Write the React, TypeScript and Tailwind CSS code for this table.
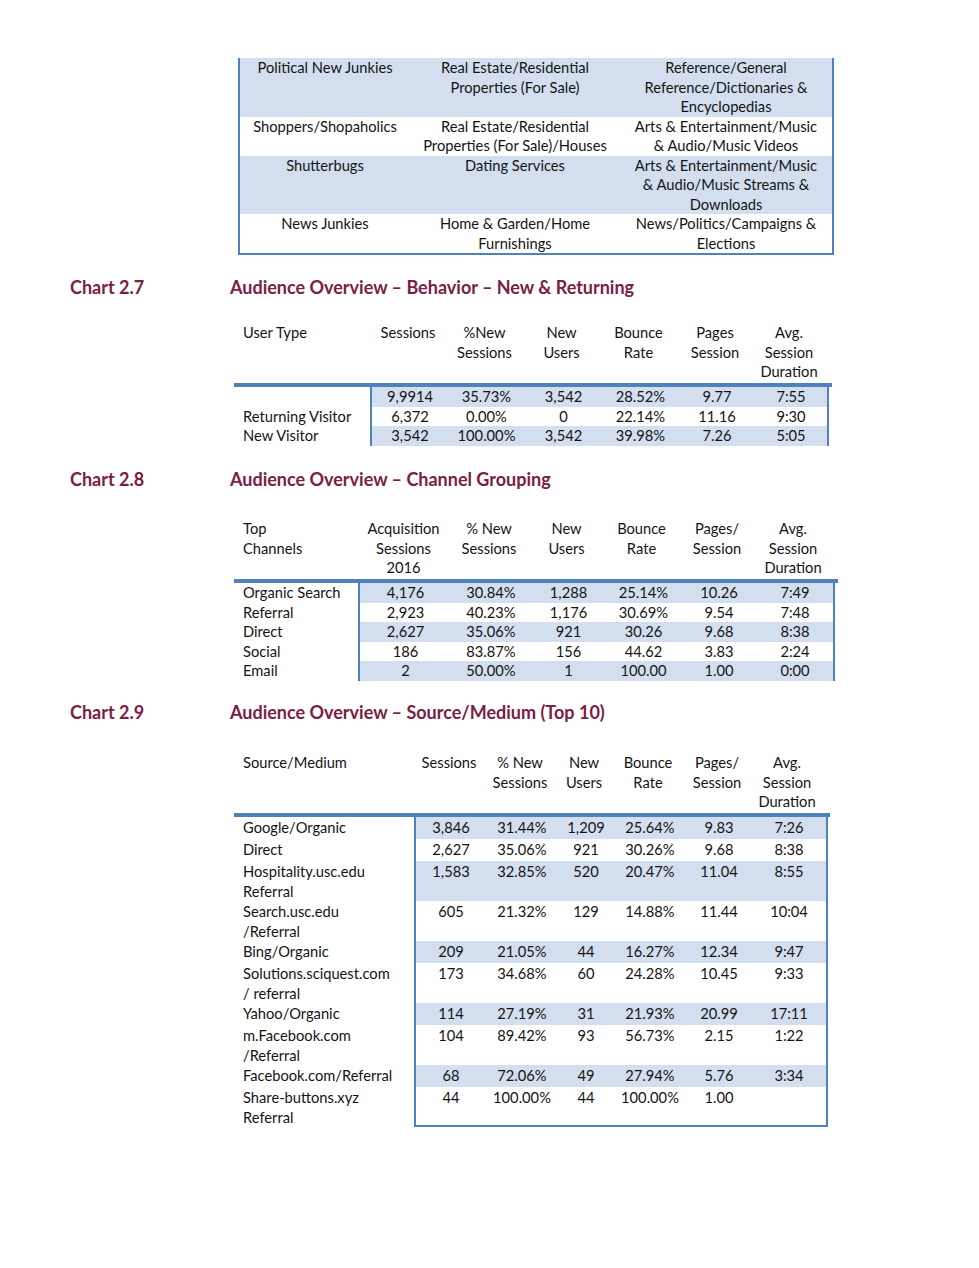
import React from "react";

type Row = { label: string[]; vals: string[]; shade: boolean };

const interests = [
    [["Political New Junkies"], ["Real Estate/Residential", "Properties (For Sale)"], ["Reference/General", "Reference/Dictionaries &", "Encyclopedias"]],
    [["Shoppers/Shopaholics"], ["Real Estate/Residential", "Properties (For Sale)/Houses"], ["Arts & Entertainment/Music", "& Audio/Music Videos"]],
    [["Shutterbugs"], ["Dating Services"], ["Arts & Entertainment/Music", "& Audio/Music Streams &", "Downloads"]],
    [["News Junkies"], ["Home & Garden/Home", "Furnishings"], ["News/Politics/Campaigns &", "Elections"]],
];

const Lines = ({lines}: { lines: string[] }) => (
    <>
        {lines.map((l, i) => <div key={i}>{l}</div>)}
    </>
);

const Heading = ({chart, title, className}: { chart: string; title: string; className: string }) => (
    <div className={"flex items-center h-[22px] font-bold text-[18px] text-[#7a2045] " + className}>
        <div className="w-[230px] pl-[70px]">{chart}</div>
        <div>{title}</div>
    </div>
);

const Table = ({labelW, widths, lineW, header, rows, rowCls, boxed, className}: {
    labelW: string;
    widths: string[];
    lineW: string;
    header: string[][];
    rows: Row[];
    rowCls: string;
    boxed?: boolean;
    className: string;
}) => (
    <div className={"ml-[234px] " + className}>
        <div className="flex pb-[1.5px]">
            <div className={labelW + " pl-[9px]"}><Lines lines={header[0]}/></div>
            {header.slice(1).map((h, i) => (
                <div key={i} className={widths[i] + " text-center whitespace-nowrap"}><Lines lines={h}/></div>
            ))}
        </div>
        <div className={lineW + " h-[4px] bg-[#4f81bd]"}/>
        {rows.map((r, i) => (
            <div key={i} className="flex">
                <div className={labelW + " pl-[9px] whitespace-nowrap " + rowCls}><Lines lines={r.label}/></div>
                <div className={"flex border-x-2 border-[#4f81bd] " + (r.shade ? "bg-[#d3dfee] " : "bg-white ") + (boxed && i === rows.length - 1 ? "border-b-2 pb-[2px]" : "")}>
                    {r.vals.map((v, j) => (
                        <div key={j} className={widths[j] + " text-center whitespace-nowrap " + rowCls}>{v}</div>
                    ))}
                </div>
            </div>
        ))}
    </div>
);

const t27: Row[] = [
    {label: [""], vals: ["9,9914", "35.73%", "3,542", "28.52%", "9.77", "7:55"], shade: true},
    {label: ["Returning Visitor"], vals: ["6,372", "0.00%", "0", "22.14%", "11.16", "9:30"], shade: false},
    {label: ["New Visitor"], vals: ["3,542", "100.00%", "3,542", "39.98%", "7.26", "5:05"], shade: true},
];

const t28: Row[] = [
    {label: ["Organic Search"], vals: ["4,176", "30.84%", "1,288", "25.14%", "10.26", "7:49"], shade: true},
    {label: ["Referral"], vals: ["2,923", "40.23%", "1,176", "30.69%", "9.54", "7:48"], shade: false},
    {label: ["Direct"], vals: ["2,627", "35.06%", "921", "30.26", "9.68", "8:38"], shade: true},
    {label: ["Social"], vals: ["186", "83.87%", "156", "44.62", "3.83", "2:24"], shade: false},
    {label: ["Email"], vals: ["2", "50.00%", "1", "100.00", "1.00", "0:00"], shade: true},
];

const t29: Row[] = [
    {label: ["Google/Organic"], vals: ["3,846", "31.44%", "1,209", "25.64%", "9.83", "7:26"], shade: true},
    {label: ["Direct"], vals: ["2,627", "35.06%", "921", "30.26%", "9.68", "8:38"], shade: false},
    {label: ["Hospitality.usc.edu", "Referral"], vals: ["1,583", "32.85%", "520", "20.47%", "11.04", "8:55"], shade: true},
    {label: ["Search.usc.edu", "/Referral"], vals: ["605", "21.32%", "129", "14.88%", "11.44", "10:04"], shade: false},
    {label: ["Bing/Organic"], vals: ["209", "21.05%", "44", "16.27%", "12.34", "9:47"], shade: true},
    {label: ["Solutions.sciquest.com", "/ referral"], vals: ["173", "34.68%", "60", "24.28%", "10.45", "9:33"], shade: false},
    {label: ["Yahoo/Organic"], vals: ["114", "27.19%", "31", "21.93%", "20.99", "17:11"], shade: true},
    {label: ["m.Facebook.com", "/Referral"], vals: ["104", "89.42%", "93", "56.73%", "2.15", "1:22"], shade: false},
    {label: ["Facebook.com/Referral"], vals: ["68", "72.06%", "49", "27.94%", "5.76", "3:34"], shade: true},
    {label: ["Share-buttons.xyz", "Referral"], vals: ["44", "100.00%", "44", "100.00%", "1.00", ""], shade: false},
];

export default function App() {
    return (
        <div className="w-[979px] h-[1268px] bg-white font-[Lato,sans-serif] text-[14.7px] leading-[19.5px] text-[#141414] overflow-hidden">
            <div className="ml-[238px] mt-[58px] w-[596px] border-x-2 border-b-2 border-[#4f81bd]">
                {interests.map((row, i) => (
                    <div key={i} className={"grid grid-cols-[170px_210px_212px] text-center whitespace-nowrap " + (i % 2 === 0 ? "bg-[#d3dfee]" : "bg-white")}>
                        {row.map((c, j) => <div key={j}><Lines lines={c}/></div>)}
                    </div>
                ))}
            </div>

            <Heading chart="Chart 2.7" title="Audience Overview – Behavior – New & Returning" className="mt-[22px]"/>
            <Table
                className="mt-[24px]"
                labelW="w-[136px]"
                widths={["w-[76px]", "w-[77px]", "w-[77px]", "w-[77px]", "w-[76px]", "w-[72px]"]}
                lineW="w-[598px]"
                header={[["User Type"], ["Sessions"], ["%New", "Sessions"], ["New", "Users"], ["Bounce", "Rate"], ["Pages", "Session"], ["Avg.", "Session", "Duration"]]}
                rows={t27}
                rowCls=""
            />

            <Heading chart="Chart 2.8" title="Audience Overview – Channel Grouping" className="mt-[23.5px]"/>
            <Table
                className="mt-[28px]"
                labelW="w-[124px]"
                widths={["w-[91px]", "w-[80px]", "w-[75px]", "w-[75px]", "w-[76px]", "w-[76px]"]}
                lineW="w-[604px]"
                header={[["Top", "Channels"], ["Acquisition", "Sessions", "2016"], ["% New", "Sessions"], ["New", "Users"], ["Bounce", "Rate"], ["Pages/", "Session"], ["Avg.", "Session", "Duration"]]}
                rows={t28}
                rowCls=""
            />

            <Heading chart="Chart 2.9" title="Audience Overview – Source/Medium (Top 10)" className="mt-[21.5px]"/>
            <Table
                className="mt-[29px]"
                labelW="w-[180px]"
                widths={["w-[70px]", "w-[72px]", "w-[56px]", "w-[72px]", "w-[66px]", "w-[74px]"]}
                lineW="w-[596px]"
                header={[["Source/Medium"], ["Sessions"], ["% New", "Sessions"], ["New", "Users"], ["Bounce", "Rate"], ["Pages/", "Session"], ["Avg.", "Session", "Duration"]]}
                rows={t29}
                rowCls="min-h-[22px] pt-[1px]"
                boxed
            />
        </div>
    );
}
